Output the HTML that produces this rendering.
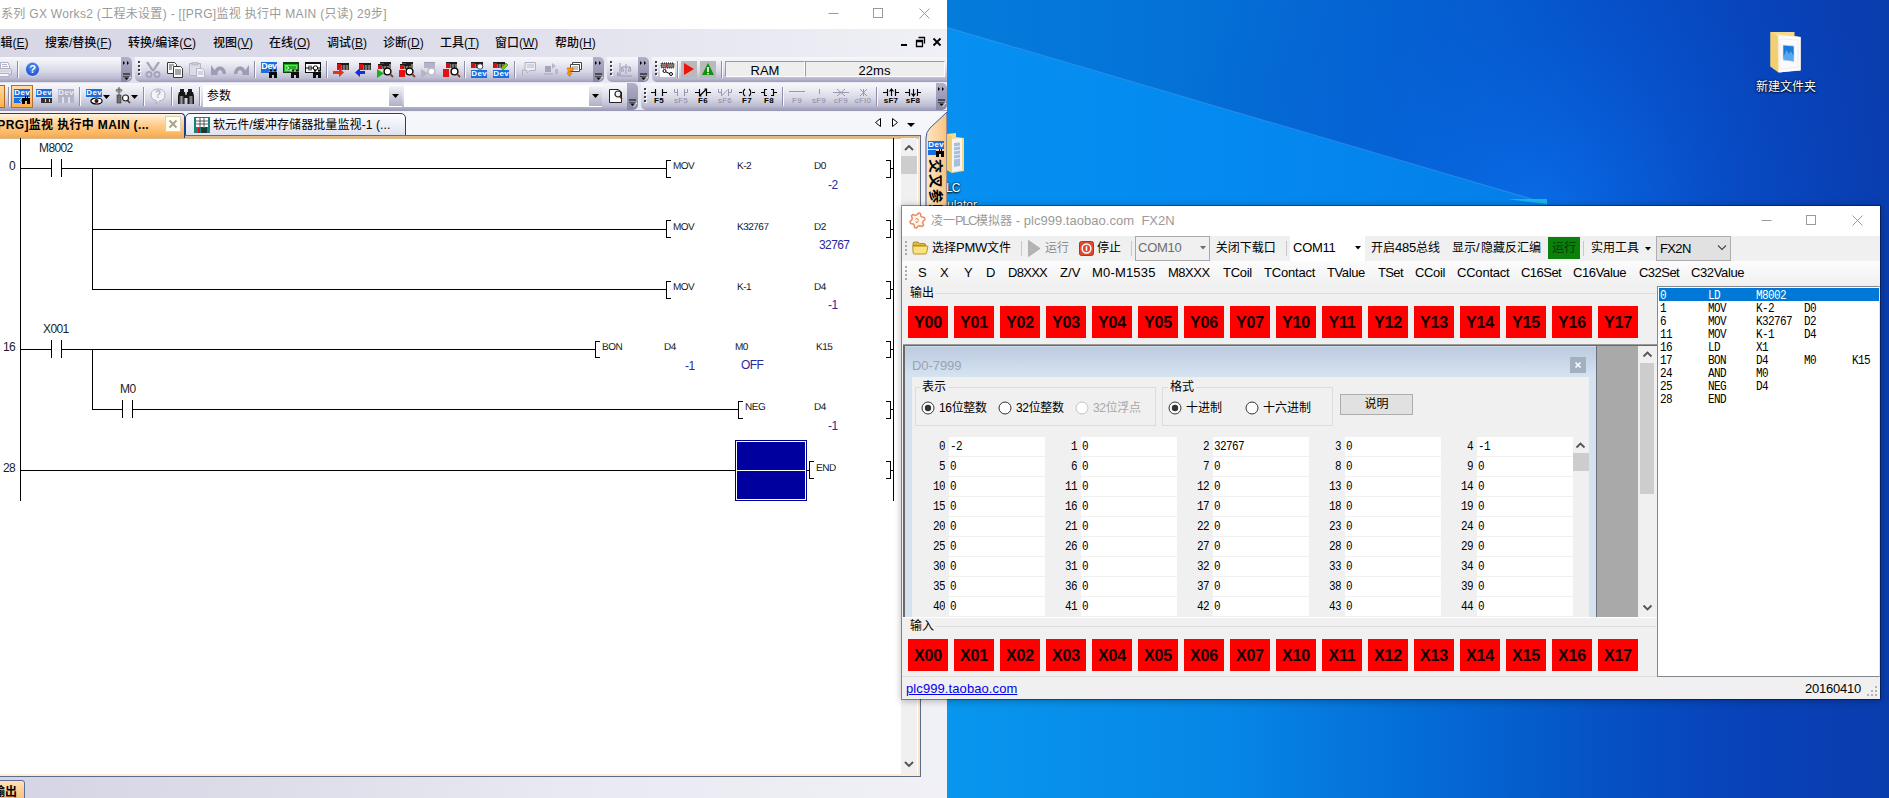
<!DOCTYPE html>
<html lang="zh-CN"><head><meta charset="utf-8"><title>GX Works2 / PLC</title>
<style>
*{box-sizing:border-box;margin:0;padding:0}
html,body{width:1889px;height:798px;overflow:hidden;background:#0a5fc8}
body{position:relative;font-family:"Liberation Sans","Noto Sans CJK SC",sans-serif;font-size:12px;color:#000}
div,svg,span.a{position:absolute}
.root{left:0;top:0;width:1889px;height:798px;overflow:hidden}
.t{white-space:nowrap}
.m{font-family:"Liberation Mono","Noto Sans CJK SC",monospace;white-space:pre}
u{text-decoration:underline;text-underline-offset:1px}

.tb{background:linear-gradient(180deg,#f7f7fb 0%,#ececf4 25%,#d9d9e7 55%,#bcbcd2 85%,#9d9dba 100%);border-radius:0 0 0 5px}
.ov{background:linear-gradient(180deg,#b0b0c8 0%,#9c9cb8 50%,#8686a6 100%);border-radius:0 5px 5px 0}
.sep{width:1px;background:#8e8ea8;box-shadow:1px 0 0 #fafafd}
.ic{font-family:"Liberation Sans",sans-serif;font-weight:bold;white-space:nowrap;text-align:center}
.gxm{font-size:12px;line-height:16px;white-space:nowrap;color:#08080c;font-weight:500}
.lad{background:#000}
.lt{font-size:10px;line-height:12px;color:#14141c;white-space:nowrap;text-rendering:geometricPrecision;letter-spacing:-0.5px}
.lb{font-size:12px;line-height:14px;color:#2a2a9c;white-space:nowrap;letter-spacing:-0.6px}
.ll{font-size:12px;line-height:14px;color:#1c1c26;white-space:nowrap;letter-spacing:-0.6px}

.st{font-size:13px;line-height:16px;white-space:nowrap;color:#000}
.st b{font-weight:normal;font-size:12px}
.rb{background:#ff0000;text-align:center;font-weight:bold;font-size:16px;line-height:33px;color:#140000;letter-spacing:-0.2px}
.gn{font-family:"Liberation Mono","Noto Sans CJK SC",monospace;font-size:11px;line-height:14px;white-space:pre;letter-spacing:-0.6px;color:#000;transform:scaleY(1.2);transform-origin:0 55%}
.gl{font-size:12px;line-height:14px;white-space:nowrap;color:#000}
.cell{background:#fff}
.sgrip{width:2px;height:2px;background:#b8b8b8}
</style></head>
<body>
<div class="root">
<!-- desktop -->
<div style="left:947px;top:0px;width:942px;height:798px;background:linear-gradient(90deg,#047cdc 0%,#0474d8 20%,#046ad4 40%,#055ccc 58%,#064ec4 70%,#0842b8 85%,#0a3cae 100%);"></div>
<svg style="left:947px;top:0px;" width="942" height="798" viewBox="0 0 942 798">
<defs>
<linearGradient id="bm" x1="0" y1="0" x2="1" y2="0">
<stop offset="0" stop-color="#0690f0"/><stop offset="0.5" stop-color="#0489f0"/><stop offset="1" stop-color="#047ee9"/>
</linearGradient>
<linearGradient id="bm2" x1="0" y1="0" x2="1" y2="0">
<stop offset="0" stop-color="#0896ee"/><stop offset="0.3" stop-color="#0686e6"/><stop offset="0.55" stop-color="#0468d4" stop-opacity="0.8"/><stop offset="0.8" stop-color="#064cba" stop-opacity="0"/>
</linearGradient>
<radialGradient id="gl" cx="593" cy="215" r="380" gradientUnits="userSpaceOnUse">
<stop offset="0" stop-color="#0a74f0" stop-opacity="0.75"/><stop offset="0.45" stop-color="#0860e0" stop-opacity="0.35"/><stop offset="1" stop-color="#0648c0" stop-opacity="0"/>
</radialGradient>
</defs>
<rect x="0" y="0" width="942" height="230" fill="url(#gl)"/>
<path d="M0 28 L600 204 L600 210 L0 210 Z" fill="url(#bm)"/>
<path d="M0 27.5 L600 203.5" stroke="#3aa6f4" stroke-width="1.2" opacity="0.55" fill="none"/>
<rect x="0" y="690" width="942" height="108" fill="url(#bm2)"/>
<path d="M600 204 L560 199 L600 199 Z" fill="#19b4e6"/>
</svg>
<svg style="left:1770px;top:32px;" width="32" height="42" viewBox="0 0 32 42">
<path d="M0.5 0 L24.5 0 L24.5 4 L30.5 5 L30.5 38 L9 40.5 L0.5 34.5 Z" fill="#f7d988"/>
<path d="M0.5 0 L8.5 4.5 L8.5 40.5 L0.5 34.5 Z" fill="#f3cf72"/>
<path d="M6.5 2.5 L30.5 5 L30.5 38.5 L9 36.5 L8.5 4.5 Z" fill="#f6f6fa"/>
<path d="M8.5 4.5 L30.5 5 L30.5 38.5 L8.5 40.5 Z" fill="#fbfbfd"/>
<path d="M10 7 L28 8 L28 35 L10 37 Z" fill="none" stroke="#e6e6ee" stroke-width="0.6"/>
<path d="M13 13 L24 14 L24 29.5 L13 28 Z" fill="#1a7ad8"/>
<path d="M13 26 L16.5 18 L19 22 L21 19 L24 25 L24 29.5 L13 28 Z" fill="#5aa6ee"/>
<path d="M13 13 L24 14 L24 29.5 L13 28 Z" fill="none" stroke="#cfe0f4" stroke-width="0.7"/>
</svg>
<div class="t" style="left:1686.0px;width:200px;text-align:center;top:79.0px;font-size:12px;line-height:16px;color:#fff;text-shadow:0 1px 2px #000,0 0 2px #000;">新建文件夹</div>
<svg style="left:947px;top:133px;" width="18" height="41" viewBox="0 0 18 41">
<path d="M0 1 L9 0 L9 4 L17 5 L17 38 L5 40 L0 37 Z" fill="#f5d98c"/>
<path d="M5 6 L15 5 L15 37 L5 39 Z" fill="#f4f4f6"/>
<path d="M7 10 L13 9.5 L13 33 L7 34 Z" fill="#a6c0dc"/>
<path d="M7 14 L13 13 M7 18 L13 17 M7 22 L13 21 M7 26 L13 25" stroke="#eef2f8" stroke-width="1"/>
<path d="M0 1 L5 4 L5 40 L0 37 Z" fill="#efcd70"/>
</svg>
<div class="t" style="left:946px;top:180.0px;font-size:12px;line-height:16px;color:#fff;letter-spacing:-0.8px;text-shadow:0 1px 2px #000,0 0 2px #000;">LC</div>
<div class="t" style="left:947px;top:197.0px;font-size:12px;line-height:16px;color:#fff;text-shadow:0 1px 2px #000,0 0 2px #000;">ulator</div>
<!-- GX Works2 window -->
<div style="left:0px;top:0px;width:947px;height:798px;background:#f0f0f7"></div>
<div style="left:0px;top:0px;width:947px;height:29px;background:#fff"></div>
<div class="t" style="left:1px;top:5.5px;font-size:12px;line-height:16px;color:#9a9a9a;letter-spacing:0.31px">系列 GX Works2 (工程未设置) - [[PRG]监视 执行中 MAIN (只读) 29步]</div>
<svg style="left:822px;top:3px;" width="120" height="22" viewBox="0 0 120 22"><path d="M6.5 10.5 H16.5" stroke="#9a9a9a" fill="none"/><rect x="51.5" y="5.5" width="9" height="9" stroke="#9a9a9a" fill="none"/><path d="M97.5 5.5 L107.5 15.5 M107.5 5.5 L97.5 15.5" stroke="#9a9a9a" fill="none"/></svg>
<div style="left:0px;top:29px;width:947px;height:28px;background:linear-gradient(90deg,#d7d7e6 0%,#dadae8 35%,#e6e6f0 70%,#f0f0f6 100%)"></div>
<div class="gxm" style="left:-11.5px;top:34.5px">编辑(<u>E</u>)</div>
<div class="gxm" style="left:45px;top:34.5px">搜索/替换(<u>F</u>)</div>
<div class="gxm" style="left:128px;top:34.5px">转换/编译(<u>C</u>)</div>
<div class="gxm" style="left:213px;top:34.5px">视图(<u>V</u>)</div>
<div class="gxm" style="left:269px;top:34.5px">在线(<u>O</u>)</div>
<div class="gxm" style="left:327px;top:34.5px">调试(<u>B</u>)</div>
<div class="gxm" style="left:383px;top:34.5px">诊断(<u>D</u>)</div>
<div class="gxm" style="left:440px;top:34.5px">工具(<u>T</u>)</div>
<div class="gxm" style="left:495px;top:34.5px">窗口(<u>W</u>)</div>
<div class="gxm" style="left:555px;top:34.5px">帮助(<u>H</u>)</div>
<svg style="left:898px;top:35px;" width="46" height="14" viewBox="0 0 46 14"><rect x="3" y="9" width="6" height="2" fill="#000"/><path d="M20.5 2.5 H26.5 V8.5 M18.5 5.5 H24.5 V11.5 H18.5 Z M18.5 6.5 H24.5" stroke="#000" stroke-width="1.3" fill="none"/><path d="M35.5 3.5 L42.5 10.5 M42.5 3.5 L35.5 10.5" stroke="#000" stroke-width="1.8" fill="none"/></svg>
<div style="left:0px;top:57px;width:947px;height:53px;background:linear-gradient(90deg,#e0e0ec,#ececf4)"></div>
<div class="tb" style="left:0px;top:57px;width:121px;height:25px;border-radius:0"></div>
<div class="ov" style="left:121px;top:57px;width:11px;height:25px;"></div><svg style="left:121px;top:59px;" width="11" height="24" viewBox="0 0 11 24"><path d="M2 2 L4 4 L2 6 Z M6 2 L8 4 L6 6 Z" fill="#000"/><path d="M2 15 H9" stroke="#000" stroke-width="1"/><path d="M2 17 L9 17 L5.5 21 Z" fill="#000"/><path d="M3 18 L10 18 L6.5 22" fill="none" stroke="#fff" stroke-width="0.8" opacity="0.8"/></svg>
<div class="tb" style="left:135px;top:57px;width:459px;height:25px;"></div>
<div class="ov" style="left:593px;top:57px;width:11px;height:25px;"></div><svg style="left:593px;top:59px;" width="11" height="24" viewBox="0 0 11 24"><path d="M2 2 L4 4 L2 6 Z M6 2 L8 4 L6 6 Z" fill="#000"/><path d="M2 15 H9" stroke="#000" stroke-width="1"/><path d="M2 17 L9 17 L5.5 21 Z" fill="#000"/><path d="M3 18 L10 18 L6.5 22" fill="none" stroke="#fff" stroke-width="0.8" opacity="0.8"/></svg>
<div class="tb" style="left:607px;top:57px;width:31px;height:25px;"></div>
<div class="ov" style="left:638px;top:57px;width:11px;height:25px;"></div><svg style="left:638px;top:59px;" width="11" height="24" viewBox="0 0 11 24"><path d="M2 2 L4 4 L2 6 Z M6 2 L8 4 L6 6 Z" fill="#000"/><path d="M2 15 H9" stroke="#000" stroke-width="1"/><path d="M2 17 L9 17 L5.5 21 Z" fill="#000"/><path d="M3 18 L10 18 L6.5 22" fill="none" stroke="#fff" stroke-width="0.8" opacity="0.8"/></svg>
<div class="tb" style="left:652px;top:57px;width:295px;height:25px;"></div>
<div class="tb" style="left:0px;top:83px;width:627px;height:27px;border-radius:0"></div>
<div class="ov" style="left:627px;top:83px;width:11px;height:27px;"></div><svg style="left:627px;top:85px;" width="11" height="24" viewBox="0 0 11 24"><path d="M2 15 H9" stroke="#000" stroke-width="1"/><path d="M2 17 L9 17 L5.5 21 Z" fill="#000"/><path d="M3 18 L10 18 L6.5 22" fill="none" stroke="#fff" stroke-width="0.8" opacity="0.8"/></svg>
<div class="tb" style="left:641px;top:83px;width:295px;height:27px;"></div>
<div class="ov" style="left:936px;top:83px;width:11px;height:27px;"></div><svg style="left:936px;top:85px;" width="11" height="24" viewBox="0 0 11 24"><path d="M2 2 L4 4 L2 6 Z M6 2 L8 4 L6 6 Z" fill="#000"/><path d="M2 15 H9" stroke="#000" stroke-width="1"/><path d="M2 17 L9 17 L5.5 21 Z" fill="#000"/><path d="M3 18 L10 18 L6.5 22" fill="none" stroke="#fff" stroke-width="0.8" opacity="0.8"/></svg>
<svg style="left:-4px;top:62px;" width="16" height="16" viewBox="0 0 16 16"><path d="M4.5 0.5 H12 L13.5 4 V7 H4.5 Z" fill="#fafafc" stroke="#b0b0c4"/><path d="M6 2.5 H11 M6 4.5 H12" stroke="#b4b4c8"/><path d="M0.5 6.5 H14.5 L15.5 8 V12.5 H0.5 Z" fill="#e2e2ec" stroke="#aaaac0"/><path d="M2.5 11.5 H13 V14.5 H2.5 Z" fill="#f6f6fa" stroke="#b0b0c4"/><path d="M2 9 H14" stroke="#c4c4d4"/></svg>
<div class="sep" style="left:17px;top:61px;width:1px;height:17px;"></div>
<svg style="left:25px;top:62px;" width="15" height="15" viewBox="0 0 15 15"><circle cx="7.5" cy="7.5" r="7" fill="#2a5fd6" stroke="#dfe6fa" stroke-width="1"/><circle cx="7.5" cy="5.5" r="5" fill="#4c84ea" opacity="0.7"/></svg><div class="ic" style="left:25px;top:63px;width:15px;font-size:11px;line-height:13px;color:#fff">?</div>
<div style="left:138px;top:61px;width:2px;height:2px;background:#3c3c50;box-shadow:1px 1px 0 #fff"></div><div style="left:138px;top:65px;width:2px;height:2px;background:#3c3c50;box-shadow:1px 1px 0 #fff"></div><div style="left:138px;top:69px;width:2px;height:2px;background:#3c3c50;box-shadow:1px 1px 0 #fff"></div><div style="left:138px;top:73px;width:2px;height:2px;background:#3c3c50;box-shadow:1px 1px 0 #fff"></div>
<svg style="left:145px;top:62px;" width="16" height="16" viewBox="0 0 16 16"><path d="M2 0 L8 9 M14 0 L8 9" stroke="#a2a2b8" stroke-width="2.2" fill="none"/><circle cx="4" cy="12.5" r="2.6" fill="none" stroke="#a2a2b8" stroke-width="1.8"/><circle cx="12" cy="12.5" r="2.6" fill="none" stroke="#a2a2b8" stroke-width="1.8"/></svg>
<svg style="left:167px;top:62px;" width="16" height="16" viewBox="0 0 16 16"><path d="M0.5 0.5 H7.5 L9.5 2.5 V11.5 H0.5 Z" fill="#fff" stroke="#3a3a3a"/><path d="M6.5 4.5 H13.5 L15.5 6.5 V15.5 H6.5 Z" fill="#fff" stroke="#3a3a3a"/><path d="M2 3 H7 M2 5 H5 M2 7 H5 M8 8 H14 M8 10 H14 M8 12 H14" stroke="#3a3a3a" stroke-width="0.9"/></svg>
<svg style="left:189px;top:62px;" width="16" height="16" viewBox="0 0 16 16"><path d="M0.5 1.5 H11.5 V13.5 H0.5 Z" fill="#dcdce8" stroke="#b4b4c8"/><rect x="3" y="0" width="6" height="3" fill="#c8c8d8" stroke="#b4b4c8" stroke-width="0.8"/><path d="M7.5 6.5 H13 L15.5 9 V15.5 H7.5 Z" fill="#f2f2f7" stroke="#b4b4c8"/><path d="M9 10 H14 M9 12 H14" stroke="#b4b4c8"/></svg>
<svg style="left:211px;top:62px;" width="16" height="16" viewBox="0 0 16 16"><g><path d="M0 3 L0 13 L7 13 Z" fill="#9c9cb4"/><path d="M3 12 C3 2 15 2 15 12 L11.5 12 C11.5 7 6.5 7 6.5 12 Z" fill="#9c9cb4"/></g></svg>
<svg style="left:233px;top:62px;" width="16" height="16" viewBox="0 0 16 16"><g transform="translate(16,0) scale(-1,1)"><path d="M0 3 L0 13 L7 13 Z" fill="#9c9cb4"/><path d="M3 12 C3 2 15 2 15 12 L11.5 12 C11.5 7 6.5 7 6.5 12 Z" fill="#9c9cb4"/></g></svg>
<div class="sep" style="left:254px;top:61px;width:1px;height:17px;"></div>
<div style="left:261px;top:62px;width:16px;height:11px;background:#1a6ee0;overflow:hidden"><div class="ic" style="left:-3px;top:-1px;width:22px;font-size:9px;line-height:10px;color:#fff;letter-spacing:-0.35px">Dev</div></div><svg style="left:268px;top:68px;" width="10" height="10" viewBox="0 0 10 10"><path d="M1 4 H2 V1.5 H4 V4 H6 V1.5 H8 V4 H9 V10 H6 V7 H4 V10 H1 Z" fill="#0c0c0c"/><path d="M0.5 3.5 H9.5" stroke="#e8e8f0" stroke-width="0.6" opacity="0.6"/></svg>
<div style="left:283px;top:62px;width:16px;height:11px;background:#20b020;border:1px solid #0c400c;border-top-width:2px"></div><svg style="left:283px;top:62px;" width="16" height="11" viewBox="0 0 16 11"><rect x="2.5" y="3.5" width="11" height="5" fill="none" stroke="#a8f0a8" stroke-width="0.6"/><path d="M3.5 4 L6 5.8 L3.5 7.6 M7 8 H11" stroke="#f0fff0" fill="none" stroke-width="1"/></svg><svg style="left:290px;top:68px;" width="10" height="10" viewBox="0 0 10 10"><path d="M1 4 H2 V1.5 H4 V4 H6 V1.5 H8 V4 H9 V10 H6 V7 H4 V10 H1 Z" fill="#0c0c0c"/><path d="M0.5 3.5 H9.5" stroke="#e8e8f0" stroke-width="0.6" opacity="0.6"/></svg>
<div style="left:305px;top:62px;width:16px;height:11px;background:#fff;border:1px solid #101010;border-top-width:2px"></div><svg style="left:305px;top:62px;" width="16" height="11" viewBox="0 0 16 11"><path d="M1 6 H4 M4 3.5 V8.5 M6 3.5 V8.5 M6 6 H8.5 M13 6 H15" stroke="#000" fill="none"/><circle cx="10.5" cy="6" r="2.2" fill="#fff" stroke="#000"/></svg><svg style="left:312px;top:68px;" width="10" height="10" viewBox="0 0 10 10"><path d="M1 4 H2 V1.5 H4 V4 H6 V1.5 H8 V4 H9 V10 H6 V7 H4 V10 H1 Z" fill="#0c0c0c"/><path d="M0.5 3.5 H9.5" stroke="#e8e8f0" stroke-width="0.6" opacity="0.6"/></svg>
<div class="sep" style="left:326px;top:61px;width:1px;height:17px;"></div>
<div style="left:337px;top:63px;width:12px;height:7px;background:repeating-linear-gradient(90deg,#7a7468 0 2px,#3a3632 2px 3px);border-top:2px solid #1c1c1c"></div><div style="left:337px;top:64px;width:4px;height:6px;background:#d01010"></div><svg style="left:333px;top:68px;" width="12" height="10" viewBox="0 0 12 10"><path d="M11 4.5 L6 0 L6 3 L0 3 L0 6 L6 6 L6 9 Z" fill="#e83010"/></svg>
<div style="left:359px;top:63px;width:12px;height:7px;background:repeating-linear-gradient(90deg,#7a7468 0 2px,#3a3632 2px 3px);border-top:2px solid #1c1c1c"></div><div style="left:359px;top:64px;width:4px;height:6px;background:#d01010"></div><svg style="left:355px;top:68px;" width="11" height="10" viewBox="0 0 11 10"><path d="M0 4.5 L5 0 L5 3 L10 3 L10 6 L5 6 L5 9 Z" fill="#1030e0"/></svg>
<div style="left:380px;top:62px;width:11px;height:6px;background:repeating-linear-gradient(90deg,#7a7468 0 2px,#3a3632 2px 3px);border-top:2px solid #1c1c1c"></div><div style="left:380px;top:63px;width:4px;height:5px;background:#d01010"></div><div style="left:378px;top:64px;width:11px;height:5px;background:repeating-linear-gradient(90deg,#7a7468 0 2px,#3a3632 2px 3px);border-top:2px solid #1c1c1c"></div><div style="left:378px;top:65px;width:4px;height:4px;background:#d01010"></div><svg style="left:377px;top:69px;" width="7" height="9" viewBox="0 0 7 9"><path d="M0 0 L7 4.5 L0 9 Z" fill="#18b018"/></svg><svg style="left:383px;top:67px;" width="11" height="11" viewBox="0 0 11 11"><circle cx="4.5" cy="4.5" r="3.4" fill="#fff" stroke="#000" stroke-width="1.4"/><path d="M7 7 L10 10" stroke="#8a3c20" stroke-width="1.8"/></svg>
<div style="left:402px;top:62px;width:11px;height:6px;background:repeating-linear-gradient(90deg,#7a7468 0 2px,#3a3632 2px 3px);border-top:2px solid #1c1c1c"></div><div style="left:402px;top:63px;width:4px;height:5px;background:#d01010"></div><div style="left:400px;top:64px;width:11px;height:5px;background:repeating-linear-gradient(90deg,#7a7468 0 2px,#3a3632 2px 3px);border-top:2px solid #1c1c1c"></div><div style="left:400px;top:65px;width:4px;height:4px;background:#d01010"></div><div style="left:399px;top:70px;width:6px;height:7px;background:#e81010"></div><svg style="left:405px;top:67px;" width="11" height="11" viewBox="0 0 11 11"><circle cx="4.5" cy="4.5" r="3.4" fill="#fff" stroke="#000" stroke-width="1.4"/><path d="M7 7 L10 10" stroke="#8a3c20" stroke-width="1.8"/></svg>
<div style="left:424px;top:62px;width:11px;height:6px;background:#b4b4c6;border-top:1px solid #a0a0b4"></div><svg style="left:421px;top:69px;" width="7" height="9" viewBox="0 0 7 9"><path d="M0 0 L7 4.5 L0 9 Z" fill="#b4b4c6"/></svg><svg style="left:427px;top:67px;" width="11" height="11" viewBox="0 0 11 11"><circle cx="4.5" cy="4.5" r="3.4" fill="#fff" stroke="#b8b8c8" stroke-width="1.4"/><path d="M7 7 L10 10" stroke="#c0c0d0" stroke-width="1.8"/></svg>
<div style="left:446px;top:62px;width:11px;height:6px;background:repeating-linear-gradient(90deg,#7a7468 0 2px,#3a3632 2px 3px);border-top:2px solid #1c1c1c"></div><div style="left:446px;top:63px;width:4px;height:5px;background:#d01010"></div><div style="left:443px;top:69px;width:6px;height:8px;background:#e81010"></div><svg style="left:450px;top:67px;" width="11" height="11" viewBox="0 0 11 11"><circle cx="4.5" cy="4.5" r="3.4" fill="#fff" stroke="#000" stroke-width="1.4"/><path d="M7 7 L10 10" stroke="#8a3c20" stroke-width="1.8"/></svg>
<div class="sep" style="left:464px;top:61px;width:1px;height:17px;"></div>
<div style="left:471px;top:62px;width:12px;height:6px;background:repeating-linear-gradient(90deg,#7a7468 0 2px,#3a3632 2px 3px);border-top:2px solid #1c1c1c"></div><div style="left:471px;top:63px;width:4px;height:5px;background:#d01010"></div><svg style="left:476px;top:62px;" width="9" height="9" viewBox="0 0 9 9"><circle cx="4" cy="4.5" r="2.8" fill="#fff" stroke="#222" stroke-width="0.8"/></svg><div style="left:471px;top:70px;width:16px;height:8px;background:#1a6ee0;overflow:hidden"><div class="ic" style="left:-3px;top:0;width:22px;font-size:8px;line-height:8px;color:#fff;letter-spacing:0.45px;text-indent:0.4px">Dev</div></div>
<div style="left:493px;top:62px;width:12px;height:6px;background:repeating-linear-gradient(90deg,#7a7468 0 2px,#3a3632 2px 3px);border-top:2px solid #1c1c1c"></div><div style="left:493px;top:63px;width:4px;height:5px;background:#d01010"></div><svg style="left:500px;top:62px;" width="9" height="9" viewBox="0 0 9 9"><path d="M1 6 L6 1 L8 3 L3 8 Z" fill="#78c818" stroke="#3c7808" stroke-width="0.6"/></svg><div style="left:493px;top:70px;width:16px;height:8px;background:#1a6ee0;overflow:hidden"><div class="ic" style="left:-3px;top:0;width:22px;font-size:8px;line-height:8px;color:#fff;letter-spacing:0.45px;text-indent:0.4px">Dev</div></div>
<div class="sep" style="left:514px;top:61px;width:1px;height:17px;"></div>
<svg style="left:522px;top:62px;" width="16" height="16" viewBox="0 0 16 16"><path d="M3 0.5 H13.5 V8.5 H8 L5 11 V8.5 H3 Z" fill="#ececf3" stroke="#b0b0c4"/><path d="M5 3 H12 M5 5 H12" stroke="#b8b8cc"/><path d="M0.5 14 V8 H3" fill="none" stroke="#b0b0c4"/></svg>
<svg style="left:544px;top:62px;" width="16" height="16" viewBox="0 0 16 16"><rect x="1" y="4" width="6" height="6" fill="#a4a4bc"/><path d="M8 1 L12 4 L8 7 Z M11 7 V12 H14 V7 Z M0 11 H9 V13 H0 Z" fill="#b8b8cc"/></svg>
<svg style="left:566px;top:62px;" width="16" height="16" viewBox="0 0 16 16"><path d="M6.5 0.5 H15.5 V7.5 H6.5 Z" fill="#fff" stroke="#444"/><path d="M4.5 2.5 H13.5 V9.5 H4.5 Z" fill="#fff" stroke="#444"/><path d="M6 5 H12 M6 7 H12" stroke="#666" stroke-width="0.8"/><path d="M1 6 H7 V9 H4 V11 H6 L3.5 14.5 L1 11 H2 V8 Z" fill="#ff9410" stroke="#c86400" stroke-width="0.6"/></svg>
<div style="left:610px;top:61px;width:2px;height:2px;background:#3c3c50;box-shadow:1px 1px 0 #fff"></div><div style="left:610px;top:65px;width:2px;height:2px;background:#3c3c50;box-shadow:1px 1px 0 #fff"></div><div style="left:610px;top:69px;width:2px;height:2px;background:#3c3c50;box-shadow:1px 1px 0 #fff"></div><div style="left:610px;top:73px;width:2px;height:2px;background:#3c3c50;box-shadow:1px 1px 0 #fff"></div>
<svg style="left:617px;top:62px;" width="16" height="16" viewBox="0 0 16 16"><path d="M3 1 V14 M3 14 H15 M9 2 V12 M5 5 H13 M5 5 L4 9 H7 Z M13 5 L11 9 H14 Z" stroke="#9c9cb6" fill="none"/><path d="M0 10 L4 12.5 L0 15 Z" fill="#a4a4bc"/></svg>
<div style="left:655px;top:61px;width:2px;height:2px;background:#3c3c50;box-shadow:1px 1px 0 #fff"></div><div style="left:655px;top:65px;width:2px;height:2px;background:#3c3c50;box-shadow:1px 1px 0 #fff"></div><div style="left:655px;top:69px;width:2px;height:2px;background:#3c3c50;box-shadow:1px 1px 0 #fff"></div><div style="left:655px;top:73px;width:2px;height:2px;background:#3c3c50;box-shadow:1px 1px 0 #fff"></div>
<div style="left:660px;top:61px;width:15px;height:16px;background:#fff"></div><svg style="left:660px;top:61px;" width="15" height="16" viewBox="0 0 15 16"><rect x="1" y="2" width="13" height="5" rx="1" fill="#7c7c7c" stroke="#000" stroke-dasharray="1 1" stroke-width="1"/><path d="M6 3 L9 4.5 L6 6 Z" fill="#e02020"/><circle cx="4.5" cy="10" r="1.5" fill="none" stroke="#000"/><circle cx="11" cy="13" r="1.5" fill="none" stroke="#000"/><path d="M6 11 L9.5 12.5" stroke="#000"/></svg>
<div class="sep" style="left:677px;top:61px;width:1px;height:17px;"></div>
<div style="left:681px;top:61px;width:16px;height:17px;background:#b9b9b9"></div>
<svg style="left:684px;top:63px;" width="11" height="12" viewBox="0 0 11 12"><path d="M0 0 L10 6 L0 12 Z" fill="#f01010"/></svg>
<div style="left:700px;top:61px;width:16px;height:17px;background:#b9b9b9"></div>
<svg style="left:702px;top:63px;" width="12" height="12" viewBox="0 0 12 12"><path d="M6 0 L12 12 L0 12 Z" fill="#109010"/><path d="M6 4 V9" stroke="#fff" stroke-width="1.6"/><rect x="5.2" y="10" width="1.6" height="1.4" fill="#fff"/></svg>
<div class="sep" style="left:721px;top:61px;width:1px;height:17px;"></div>
<div style="left:725px;top:61px;width:80px;height:16px;background:#eeeeee;border:1px solid #9a9aa4;border-right-color:#fff;border-bottom-color:#fff"></div>
<div class="t" style="left:665.0px;width:200px;text-align:center;top:61.5px;font-size:13px;line-height:17px;color:#000;">RAM</div>
<div style="left:805px;top:61px;width:140px;height:16px;background:#eeeeee;border:1px solid #9a9aa4;border-right-color:#fff;border-bottom-color:#fff"></div>
<div class="t" style="left:774.5px;width:200px;text-align:center;top:61.5px;font-size:13px;line-height:17px;color:#000;">22ms</div>
<div style="left:-11px;top:85px;width:16px;height:23px;background:linear-gradient(180deg,#ffd9a0,#ffb24c);border:1px solid #b06a20"></div>
<div class="sep" style="left:8px;top:87px;width:1px;height:19px;"></div>
<div style="left:11px;top:85px;width:22px;height:23px;background:linear-gradient(180deg,#ffdcaa,#fdb04e);border:1px solid #b4702c"></div>
<div style="left:14px;top:89px;width:16px;height:7.5px;background:#1a6ee0;overflow:hidden"><div class="ic" style="left:-3px;top:0;width:22px;font-size:8px;line-height:7.5px;color:#fff;letter-spacing:0.45px;text-indent:0.4px">Dev</div></div>
<div style="left:14px;top:97.5px;width:8px;height:5.5px;background:#1a6ee0"></div>
<svg style="left:19px;top:98px;" width="4" height="5" viewBox="0 0 4 5"><path d="M3.5 0 L0.5 2.5 L3.5 5" fill="none" stroke="#e8f0ff" stroke-width="1"/></svg>
<svg style="left:21px;top:95px;" width="10" height="10" viewBox="0 0 10 10"><path d="M1 3 H4 V1 H5 V3 H6 V1 H7 V3 H9 V9 H6 V6 H4 V9 H1 Z" fill="#000"/></svg>
<div style="left:36px;top:89px;width:16px;height:7.5px;background:#1a6ee0;overflow:hidden"><div class="ic" style="left:-3px;top:0;width:22px;font-size:8px;line-height:7.5px;color:#fff;letter-spacing:0.45px;text-indent:0.4px">Dev</div></div>
<div style="left:41px;top:98px;width:11px;height:5px;background:repeating-linear-gradient(90deg,#333 0 3px,#ddd 3px 4px);border:1px solid #333"></div>
<div style="left:58px;top:89px;width:16px;height:7.5px;background:#b0b0c6;overflow:hidden"><div class="ic" style="left:-3px;top:0;width:22px;font-size:8px;line-height:7.5px;color:#ececf4;letter-spacing:0.45px;text-indent:0.4px">Dev</div></div>
<div style="left:58px;top:97px;width:16px;height:6px;background:repeating-linear-gradient(90deg,#b4b4c8 0 4px,#e0e0ea 4px 6px)"></div>
<div class="sep" style="left:79px;top:87px;width:1px;height:19px;"></div>
<div style="left:86px;top:89px;width:16px;height:7.5px;background:#1a6ee0;overflow:hidden"><div class="ic" style="left:-3px;top:0;width:22px;font-size:8px;line-height:7.5px;color:#fff;letter-spacing:0.45px;text-indent:0.4px">Dev</div></div>
<svg style="left:90px;top:96.5px;" width="13" height="8" viewBox="0 0 13 8"><ellipse cx="6.5" cy="4" rx="5.6" ry="3" fill="#fff" stroke="#000" stroke-width="1.2"/><circle cx="6.5" cy="4" r="2" fill="#3a1010"/></svg>
<svg style="left:103px;top:95px;" width="8" height="5" viewBox="0 0 8 5"><path d="M0 0 H7 L3.5 4 Z" fill="#000"/></svg>
<svg style="left:115px;top:87px;" width="16" height="18" viewBox="0 0 16 18"><path d="M4 0 V8 M1 3 H7" stroke="#555" /><ellipse cx="4" cy="3.5" rx="3" ry="1.6" fill="none" stroke="#666" stroke-width="0.8"/><rect x="2" y="8" width="4" height="8" fill="#707070" stroke="#333" stroke-width="0.6"/><circle cx="10.5" cy="11" r="3" fill="#fff" stroke="#222" stroke-width="1.2"/><path d="M12.5 13.5 L15 16" stroke="#5a2c10" stroke-width="1.6"/></svg>
<svg style="left:131px;top:95px;" width="8" height="5" viewBox="0 0 8 5"><path d="M0 0 H7 L3.5 4 Z" fill="#000"/></svg>
<div class="sep" style="left:143px;top:87px;width:1px;height:19px;"></div>
<svg style="left:150px;top:88px;" width="16" height="17" viewBox="0 0 16 17"><path d="M8 1 C12.5 1 15 3.5 15 7 C15 10.5 12.5 12.5 9.5 12.8 L6 16 L6.5 12.6 C3 12 1 10 1 7 C1 3.5 3.5 1 8 1 Z" fill="#f3f3f8" stroke="#aeaec2"/></svg>
<div class="ic" style="left:150px;top:89px;width:16px;font-size:10px;line-height:12px;color:#b0b0c4">?</div>
<div class="sep" style="left:171px;top:87px;width:1px;height:19px;"></div>
<svg style="left:178px;top:88px;" width="17" height="17" viewBox="0 0 17 17"><defs><linearGradient id="bn" x1="0" y1="0" x2="1" y2="0"><stop offset="0" stop-color="#222"/><stop offset="0.5" stop-color="#9a9a9a"/><stop offset="1" stop-color="#1a1a1a"/></linearGradient></defs><path d="M2 1 H6 V4 H2 Z M10 1 H14 V4 H10 Z" fill="#1c1c1c"/><path d="M1 4 H7 L7.5 7 H8.5 L9 4 H15 L16 8 V16 H9.5 V10 H6.5 V16 H0 V8 Z" fill="#161616"/><rect x="1" y="8" width="5" height="8" fill="url(#bn)"/><rect x="10.5" y="8" width="5" height="8" fill="url(#bn)"/></svg>
<div class="sep" style="left:199px;top:87px;width:1px;height:19px;"></div>
<div style="left:203px;top:85px;width:199px;height:22px;background:#fff"></div>
<div class="t" style="left:207px;top:88.0px;font-size:12px;line-height:16px;color:#000;">参数</div>
<div style="left:389px;top:86px;width:13px;height:20px;background:linear-gradient(180deg,#f2f2f7,#c9c9da 60%,#b0b0c6)"></div>
<svg style="left:392px;top:94px;" width="8" height="5" viewBox="0 0 8 5"><path d="M0 0 H7 L3.5 4 Z" fill="#000"/></svg>
<div style="left:404px;top:85px;width:198px;height:22px;background:#fff"></div>
<div style="left:589px;top:86px;width:13px;height:20px;background:linear-gradient(180deg,#f2f2f7,#c9c9da 60%,#b0b0c6)"></div>
<svg style="left:592px;top:94px;" width="8" height="5" viewBox="0 0 8 5"><path d="M0 0 H7 L3.5 4 Z" fill="#000"/></svg>
<svg style="left:608px;top:88px;" width="16" height="17" viewBox="0 0 16 17"><path d="M1.5 1.5 H10 L13.5 4 V14.5 H1.5 Z" fill="#fff" stroke="#222"/><circle cx="10" cy="6" r="3" fill="#f4f4f4" stroke="#222" stroke-width="1.2"/><path d="M12 8.5 L14 11" stroke="#5a2c10" stroke-width="1.6"/></svg>
<div style="left:644px;top:88px;width:2px;height:2px;background:#3c3c50;box-shadow:1px 1px 0 #fff"></div><div style="left:644px;top:92px;width:2px;height:2px;background:#3c3c50;box-shadow:1px 1px 0 #fff"></div><div style="left:644px;top:96px;width:2px;height:2px;background:#3c3c50;box-shadow:1px 1px 0 #fff"></div><div style="left:644px;top:100px;width:2px;height:2px;background:#3c3c50;box-shadow:1px 1px 0 #fff"></div>
<svg style="left:651px;top:88px;" width="16" height="9" viewBox="0 0 16 9"><path d="M0 4.5 H4 M4.5 1 V8 M11.5 1 V8 M12 4.5 H16" stroke="#000" stroke-width="1.15" fill="none"/></svg><div class="ic" style="left:647px;top:97.2px;width:24px;font-size:8px;line-height:8px;color:#000;font-weight:bold;letter-spacing:0.25px">F5</div>
<svg style="left:673px;top:88px;" width="16" height="9" viewBox="0 0 16 9"><path d="M1.5 1 V4.5 H4 M4.5 1 V8 M11.5 1 V8 M12 4.5 H14.5 V1" stroke="#9898b2" stroke-width="1" fill="none"/></svg><div class="ic" style="left:669px;top:97.2px;width:24px;font-size:8px;line-height:8px;color:#8a8aa6;font-weight:normal;letter-spacing:0.25px">sF5</div>
<svg style="left:695px;top:88px;" width="16" height="9" viewBox="0 0 16 9"><path d="M0 4.5 H4 M4.5 1 V8 M11.5 1 V8 M12 4.5 H16 M5 7.5 L11 1.5 M4.5 6 V8 H6.5 M9.5 1 H11.5 V3" stroke="#000" stroke-width="1.15" fill="none"/></svg><div class="ic" style="left:691px;top:97.2px;width:24px;font-size:8px;line-height:8px;color:#000;font-weight:bold;letter-spacing:0.25px">F6</div>
<svg style="left:717px;top:88px;" width="16" height="9" viewBox="0 0 16 9"><path d="M1.5 1 V4.5 H4 M4.5 1 V8 M11.5 1 V8 M12 4.5 H14.5 V1 M5 7.5 L11 1.5" stroke="#9898b2" stroke-width="1" fill="none"/></svg><div class="ic" style="left:713px;top:97.2px;width:24px;font-size:8px;line-height:8px;color:#8a8aa6;font-weight:normal;letter-spacing:0.25px">sF6</div>
<svg style="left:739px;top:88px;" width="16" height="9" viewBox="0 0 16 9"><path d="M0 4.5 H3 M6 1 C3.6 3 3.6 6 6 8 M10 1 C12.4 3 12.4 6 10 8 M13 4.5 H16" stroke="#000" stroke-width="1.15" fill="none"/></svg><div class="ic" style="left:735px;top:97.2px;width:24px;font-size:8px;line-height:8px;color:#000;font-weight:bold;letter-spacing:0.25px">F7</div>
<svg style="left:761px;top:88px;" width="16" height="9" viewBox="0 0 16 9"><path d="M0 4.5 H3 M6 1.5 H3.5 V7.5 H6 M10 1.5 H12.5 V7.5 H10 M13 4.5 H16" stroke="#000" stroke-width="1.15" fill="none"/></svg><div class="ic" style="left:757px;top:97.2px;width:24px;font-size:8px;line-height:8px;color:#000;font-weight:bold;letter-spacing:0.25px">F8</div>
<div class="sep" style="left:782px;top:87px;width:1px;height:19px;"></div>
<svg style="left:789px;top:88px;" width="16" height="9" viewBox="0 0 16 9"><path d="M0 3.5 H16" stroke="#9898b2" stroke-width="1" fill="none"/></svg><div class="ic" style="left:785px;top:97.2px;width:24px;font-size:8px;line-height:8px;color:#8a8aa6;font-weight:normal;letter-spacing:0.25px">F9</div>
<svg style="left:811px;top:88px;" width="16" height="9" viewBox="0 0 16 9"><path d="M8.5 1 V6" stroke="#9898b2" stroke-width="1" fill="none"/></svg><div class="ic" style="left:807px;top:97.2px;width:24px;font-size:8px;line-height:8px;color:#8a8aa6;font-weight:normal;letter-spacing:0.25px">sF9</div>
<svg style="left:833px;top:88px;" width="16" height="9" viewBox="0 0 16 9"><path d="M0 4.5 H16 M4 1 L12 8 M12 1 L4 8" stroke="#9898b2" stroke-width="1" fill="none"/></svg><div class="ic" style="left:829px;top:97.2px;width:24px;font-size:8px;line-height:8px;color:#8a8aa6;font-weight:normal;letter-spacing:0.25px">cF9</div>
<svg style="left:855px;top:88px;" width="16" height="9" viewBox="0 0 16 9"><path d="M8.5 1 V8 M5 1 L12 8 M12 1 L5 8" stroke="#9898b2" stroke-width="1" fill="none"/></svg><div class="ic" style="left:851px;top:97.2px;width:24px;font-size:8px;line-height:8px;color:#8a8aa6;font-weight:normal;letter-spacing:0.25px">cFI0</div>
<div class="sep" style="left:876px;top:87px;width:1px;height:19px;"></div>
<svg style="left:883px;top:88px;" width="16" height="9" viewBox="0 0 16 9"><path d="M0 4.5 H4 M4.5 1 V8 M12.5 1 V8 M13 4.5 H16 M8.5 8 V1.5 M6.5 3.5 L8.5 1 L10.5 3.5" stroke="#000" stroke-width="1.15" fill="none"/></svg><div class="ic" style="left:879px;top:97.2px;width:24px;font-size:8px;line-height:8px;color:#000;font-weight:bold;letter-spacing:0.25px">sF7</div>
<svg style="left:905px;top:88px;" width="16" height="9" viewBox="0 0 16 9"><path d="M0 4.5 H4 M4.5 1 V8 M12.5 1 V8 M13 4.5 H16 M8.5 1 V7.5 M6.5 5.5 L8.5 8 L10.5 5.5" stroke="#000" stroke-width="1.15" fill="none"/></svg><div class="ic" style="left:901px;top:97.2px;width:24px;font-size:8px;line-height:8px;color:#000;font-weight:bold;letter-spacing:0.25px">sF8</div>
<div style="left:0px;top:110px;width:947px;height:26px;background:linear-gradient(180deg,#e9e9f2 0,#f6f7fb 3px,#f5f6fb 100%)"></div>
<div style="left:0px;top:110px;width:947px;height:1px;background:#9c9cb6"></div>
<div style="left:185px;top:113px;width:221px;height:23px;background:linear-gradient(180deg,#fdfdff 0%,#eef0f8 50%,#dfe2ee 100%);border:1px solid #1c3f8c;border-radius:5px 5px 0 0"></div>
<div style="left:194px;top:117px;width:16px;height:16px;background:#1a8078"></div>
<svg style="left:194px;top:117px;" width="16" height="16" viewBox="0 0 16 16"><rect x="2" y="1" width="12" height="9" fill="#fff"/><path d="M2 4 H14 M2 7 H14 M6 1 V10 M10 1 V10" stroke="#333" stroke-width="0.8"/><rect x="4" y="11" width="2" height="5" fill="#e01010"/><path d="M8 10 V16 M10 11 V16 M12 10 V16" stroke="#111" stroke-width="1.2"/></svg>
<div class="t" style="left:213px;top:116.5px;font-size:12px;line-height:16px;color:#000;letter-spacing:0.1px">软元件/缓冲存储器批量监视-1 (...</div>
<svg style="left:873px;top:116px;" width="46" height="14" viewBox="0 0 46 14"><path d="M7.5 2.5 L2.5 6.5 L7.5 10.5 Z" fill="#fff" stroke="#000"/><path d="M19.5 2.5 L24.5 6.5 L19.5 10.5 Z" fill="#fff" stroke="#000"/><path d="M34 7 H42 L38 11 Z" fill="#000"/></svg>
<div style="left:-2px;top:135px;width:923px;height:642px;background:#fff;border:1px solid #5e6c8c"></div>
<div style="left:-2px;top:136px;width:922px;height:640px;border:2px solid #ecc99a;border-top:3px solid #dcb98a;border-bottom-color:#fbeed4;border-right-color:#f7e6c8;"></div>
<div style="left:-6px;top:113px;width:191px;height:25px;background:linear-gradient(180deg,#fff3e0 0%,#ffdcae 25%,#ffc680 55%,#fcb45c 85%,#e9a860 100%);border:1px solid #1c3f8c;border-bottom:0;border-radius:4px 4px 0 0"></div>
<div class="t" style="left:-7px;top:116.5px;font-size:12px;line-height:16px;color:#000;font-weight:bold;letter-spacing:0.35px">[PRG]监视 执行中 MAIN (...</div>
<div style="left:165px;top:116px;width:16px;height:16px;background:#fffcf0;border:1px solid #d8d0b8"></div>
<svg style="left:165px;top:116px;" width="16" height="16" viewBox="0 0 16 16"><path d="M4.5 4.5 L11.5 11.5 M11.5 4.5 L4.5 11.5" stroke="#a8a496" stroke-width="2" fill="none"/></svg>
<div style="left:901px;top:138px;width:16px;height:636px;background:#f0f0f0"></div>
<div style="left:901px;top:156px;width:16px;height:18px;background:#cdcdcd"></div>
<svg style="left:904px;top:144px;" width="10" height="8" viewBox="0 0 10 8"><path d="M1 6 L5 2 L9 6" stroke="#505050" stroke-width="1.8" fill="none"/></svg>
<svg style="left:904px;top:760px;" width="10" height="8" viewBox="0 0 10 8"><path d="M1 2 L5 6 L9 2" stroke="#505050" stroke-width="1.8" fill="none"/></svg>
<svg style="left:921px;top:108px;" width="26" height="100" viewBox="0 0 26 100"><defs><linearGradient id="vt" x1="0" y1="0" x2="1" y2="0"><stop offset="0" stop-color="#fde6c6"/><stop offset="0.6" stop-color="#fbd29c"/><stop offset="1" stop-color="#f8c27c"/></linearGradient></defs><path d="M26 4 L9 20 Q5 24 5 30 L5 100 L26 100 Z" fill="url(#vt)" stroke="#3c5c9c" stroke-width="1"/></svg>
<div style="left:928px;top:141px;width:16px;height:8px;background:#1a6ee0;overflow:hidden"><div class="ic" style="left:-3px;top:0;width:22px;font-size:8px;line-height:8px;color:#fff;letter-spacing:0.45px;text-indent:0.4px">Dev</div></div>
<div style="left:928px;top:150px;width:8px;height:5px;background:#1a6ee0"></div>
<svg style="left:935px;top:148px;" width="10" height="10" viewBox="0 0 10 10"><path d="M1 3 H4 V1 H5 V3 H6 V1 H7 V3 H9 V9 H6 V6 H4 V9 H1 Z" fill="#000"/></svg>
<div class="t" style="left:928px;top:159px;width:16px;font-size:14px;line-height:16px;letter-spacing:1px;font-weight:bold;color:#000;writing-mode:vertical-rl;text-orientation:sideways;white-space:nowrap;height:60px;overflow:hidden">交叉参照</div>
<div style="left:0px;top:777px;width:947px;height:21px;background:linear-gradient(90deg,#d4d4e4 0%,#dedeea 30%,#e9e9f2 60%,#f0f0f6 100%)"></div>
<div style="left:-4px;top:780px;width:29px;height:20px;background:linear-gradient(180deg,#ffe2b8,#fdbf72);border:1px solid #5c6c9c;border-radius:3px 3px 0 0"></div>
<div class="t" style="left:-7px;top:783.5px;font-size:12px;line-height:16px;color:#000;font-weight:bold">输出</div>
<div class="lad" style="left:20px;top:138px;width:1px;height:363px;"></div>
<div class="lad" style="left:893px;top:138px;width:1px;height:363px;"></div>
<div class="lad" style="left:20px;top:168px;width:31px;height:1px;"></div>
<div class="lad" style="left:51px;top:159px;width:1px;height:18px;"></div>
<div class="lad" style="left:61px;top:159px;width:1px;height:18px;"></div>
<div class="lad" style="left:61px;top:168px;width:605px;height:1px;"></div>
<div class="lad" style="left:92px;top:168px;width:1px;height:122px;"></div>
<div class="lad" style="left:92px;top:229px;width:574px;height:1px;"></div>
<div class="lad" style="left:92px;top:289px;width:574px;height:1px;"></div>
<div class="lad" style="left:666px;top:160px;width:1px;height:18px;"></div>
<div class="lad" style="left:666px;top:160px;width:5px;height:1px;"></div>
<div class="lad" style="left:666px;top:177px;width:5px;height:1px;"></div>
<div class="lad" style="left:890px;top:160px;width:1px;height:18px;"></div>
<div class="lad" style="left:886px;top:160px;width:5px;height:1px;"></div>
<div class="lad" style="left:886px;top:177px;width:5px;height:1px;"></div>
<div class="lad" style="left:890px;top:168px;width:3px;height:1px;"></div>
<div class="lad" style="left:666px;top:220px;width:1px;height:18px;"></div>
<div class="lad" style="left:666px;top:220px;width:5px;height:1px;"></div>
<div class="lad" style="left:666px;top:237px;width:5px;height:1px;"></div>
<div class="lad" style="left:890px;top:220px;width:1px;height:18px;"></div>
<div class="lad" style="left:886px;top:220px;width:5px;height:1px;"></div>
<div class="lad" style="left:886px;top:237px;width:5px;height:1px;"></div>
<div class="lad" style="left:890px;top:229px;width:3px;height:1px;"></div>
<div class="lad" style="left:666px;top:281px;width:1px;height:18px;"></div>
<div class="lad" style="left:666px;top:281px;width:5px;height:1px;"></div>
<div class="lad" style="left:666px;top:298px;width:5px;height:1px;"></div>
<div class="lad" style="left:890px;top:281px;width:1px;height:18px;"></div>
<div class="lad" style="left:886px;top:281px;width:5px;height:1px;"></div>
<div class="lad" style="left:886px;top:298px;width:5px;height:1px;"></div>
<div class="lad" style="left:890px;top:289px;width:3px;height:1px;"></div>
<div class="lad" style="left:20px;top:349px;width:31px;height:1px;"></div>
<div class="lad" style="left:51px;top:340px;width:1px;height:18px;"></div>
<div class="lad" style="left:61px;top:340px;width:1px;height:18px;"></div>
<div class="lad" style="left:61px;top:349px;width:534px;height:1px;"></div>
<div class="lad" style="left:595px;top:341px;width:1px;height:17px;"></div>
<div class="lad" style="left:595px;top:341px;width:5px;height:1px;"></div>
<div class="lad" style="left:595px;top:357px;width:5px;height:1px;"></div>
<div class="lad" style="left:890px;top:341px;width:1px;height:17px;"></div>
<div class="lad" style="left:886px;top:341px;width:5px;height:1px;"></div>
<div class="lad" style="left:886px;top:357px;width:5px;height:1px;"></div>
<div class="lad" style="left:890px;top:349px;width:3px;height:1px;"></div>
<div class="lad" style="left:92px;top:349px;width:1px;height:61px;"></div>
<div class="lad" style="left:92px;top:409px;width:30px;height:1px;"></div>
<div class="lad" style="left:122px;top:400px;width:1px;height:18px;"></div>
<div class="lad" style="left:132px;top:400px;width:1px;height:18px;"></div>
<div class="lad" style="left:132px;top:409px;width:606px;height:1px;"></div>
<div class="lad" style="left:738px;top:401px;width:1px;height:18px;"></div>
<div class="lad" style="left:738px;top:401px;width:5px;height:1px;"></div>
<div class="lad" style="left:738px;top:418px;width:5px;height:1px;"></div>
<div class="lad" style="left:890px;top:401px;width:1px;height:18px;"></div>
<div class="lad" style="left:886px;top:401px;width:5px;height:1px;"></div>
<div class="lad" style="left:886px;top:418px;width:5px;height:1px;"></div>
<div class="lad" style="left:890px;top:409px;width:3px;height:1px;"></div>
<div class="lad" style="left:20px;top:470px;width:715px;height:1px;"></div>
<div class="lad" style="left:807px;top:470px;width:2px;height:1px;"></div>
<div class="lad" style="left:809px;top:461px;width:1px;height:18px;"></div>
<div class="lad" style="left:809px;top:461px;width:5px;height:1px;"></div>
<div class="lad" style="left:809px;top:478px;width:5px;height:1px;"></div>
<div class="lad" style="left:890px;top:461px;width:1px;height:18px;"></div>
<div class="lad" style="left:886px;top:461px;width:5px;height:1px;"></div>
<div class="lad" style="left:886px;top:478px;width:5px;height:1px;"></div>
<div class="lad" style="left:890px;top:470px;width:3px;height:1px;"></div>
<div style="left:735px;top:440px;width:72px;height:61px;background:#00009e;border:1px solid #000090;"></div>
<div style="left:736px;top:441px;width:70px;height:59px;border:1px solid #fff;"></div>
<div style="left:736px;top:470px;width:70px;height:1px;background:#fff"></div>
<div class="ll" style="left:39px;top:141px">M8002</div>
<div class="ll" style="left:9px;top:159px">0</div>
<div class="ll" style="left:43px;top:322px">X001</div>
<div class="ll" style="left:3px;top:340px">16</div>
<div class="ll" style="left:120px;top:382px">M0</div>
<div class="ll" style="left:3px;top:461px">28</div>
<div class="lt" style="left:673px;top:160.9px">MOV</div>
<div class="lt" style="left:737px;top:160.9px">K-2</div>
<div class="lt" style="left:814px;top:160.9px">D0</div>
<div class="lb" style="left:828px;top:178px">-2</div>
<div class="lt" style="left:673px;top:221.9px">MOV</div>
<div class="lt" style="left:737px;top:221.9px">K32767</div>
<div class="lt" style="left:814px;top:221.9px">D2</div>
<div class="lb" style="left:819px;top:238px">32767</div>
<div class="lt" style="left:673px;top:281.9px">MOV</div>
<div class="lt" style="left:737px;top:281.9px">K-1</div>
<div class="lt" style="left:814px;top:281.9px">D4</div>
<div class="lb" style="left:828px;top:298px">-1</div>
<div class="lt" style="left:602px;top:341.9px">BON</div>
<div class="lt" style="left:664px;top:341.9px">D4</div>
<div class="lt" style="left:735px;top:341.9px">M0</div>
<div class="lt" style="left:816px;top:341.9px">K15</div>
<div class="lb" style="left:685px;top:359px">-1</div>
<div class="lb" style="left:741px;top:358px">OFF</div>
<div class="lt" style="left:745px;top:401.9px">NEG</div>
<div class="lt" style="left:814px;top:401.9px">D4</div>
<div class="lb" style="left:828px;top:419px">-1</div>
<div class="lt" style="left:816px;top:462.9px">END</div>
<!-- PLC simulator window -->
<div style="left:901px;top:205px;width:980px;height:495px;background:#f0f0f0;background-clip:padding-box;border:1px solid rgba(0,0,0,0.36);box-shadow:0 1px 7px 0 rgba(0,0,0,0.28)"></div>
<div style="left:902px;top:206px;width:978px;height:30px;background:#fff"></div>
<svg style="left:909px;top:212px;" width="17" height="17" viewBox="0 0 17 17"><path d="M9.5 1.0 L11.4 1.5 L11.9 4.1 L12.9 5.1 L15.5 5.6 L16.0 7.5 L14.1 9.2 L13.7 10.6 L14.5 13.1 L13.1 14.5 L10.6 13.7 L9.2 14.1 L7.5 16.0 L5.6 15.5 L5.1 12.9 L4.1 11.9 L1.5 11.4 L1.0 9.5 L2.9 7.8 L3.3 6.4 L2.5 3.9 L3.9 2.5 L6.4 3.3 L7.8 2.9 Z" fill="#fff7f2" stroke="#e78e60" stroke-width="1.5" stroke-linejoin="round"/><path d="M7 6.3 Q9.6 6.6 9.3 8.4 Q10 10.4 7 10.7 M6.3 7.5 h1 M6.3 9.6 h1" fill="none" stroke="#e78e60" stroke-width="1"/></svg>
<div class="st" style="left:931px;top:212.5px;color:#9a9a9a;"><b>凌一</b><span style="letter-spacing:-1.41px">PLC</span><b>模拟器</b><span style="letter-spacing:0.03px"> - plc999.taobao.com  FX2N</span></div>
<svg style="left:1755px;top:209px;" width="120" height="22" viewBox="0 0 120 22"><path d="M6.5 11.5 H16.5" stroke="#9a9a9a" fill="none"/><rect x="51.5" y="6.5" width="9" height="9" stroke="#9a9a9a" fill="none"/><path d="M97.5 6.5 L107.5 16.5 M107.5 6.5 L97.5 16.5" stroke="#9a9a9a" fill="none"/></svg>
<div style="left:902px;top:236px;width:978px;height:25px;background:linear-gradient(180deg,#efefef,#f1f1f1)"></div>
<div style="left:905px;top:241px;width:2px;height:2px;background:#a8a8a8"></div><div style="left:905px;top:245px;width:2px;height:2px;background:#a8a8a8"></div><div style="left:905px;top:249px;width:2px;height:2px;background:#a8a8a8"></div><div style="left:905px;top:253px;width:2px;height:2px;background:#a8a8a8"></div>
<svg style="left:912px;top:240px;" width="17" height="16" viewBox="0 0 17 16"><path d="M1 3.5 Q1 2 2.5 2 H6 L7.5 3.5 H12 Q13.5 3.5 13.5 5 V6 H1 Z" fill="#e2b93c" stroke="#a07c14" stroke-width="0.8"/><path d="M0.8 6 H15 Q16 6 15.8 7 L14.6 12.8 Q14.4 14 13.2 14 H2.4 Q1.2 14 1.1 12.8 Z" fill="#fbe27a" stroke="#a07c14" stroke-width="0.8"/></svg>
<div class="st" style="left:932px;top:240px;color:#000;"><b>选择</b><span style="letter-spacing:-0.23px">PMW</span><b>文件</b></div>
<div style="left:1021px;top:241px;width:1px;height:15px;background:#c8c8c8"></div>
<svg style="left:1028px;top:240px;" width="13" height="17" viewBox="0 0 13 17"><path d="M0.5 0.5 L12 8.5 L0.5 16.5 Z" fill="#b4b4b4" stroke="#9c9c9c" stroke-width="0.6"/></svg>
<div class="st" style="left:1045px;top:240px;color:#8a8a8a;"><b>运行</b></div>
<svg style="left:1079px;top:241px;" width="15" height="15" viewBox="0 0 15 15"><rect x="0.5" y="0.5" width="14" height="14" rx="2" fill="#e0492c" stroke="#b83418"/><circle cx="7.5" cy="7.5" r="4.4" fill="none" stroke="#fff" stroke-width="1.5"/><path d="M7.5 5.2 V9.8" stroke="#fff" stroke-width="1.5"/></svg>
<div class="st" style="left:1097px;top:240px;color:#000;"><b>停止</b></div>
<div style="left:1131px;top:241px;width:1px;height:15px;background:#c8c8c8"></div>
<div style="left:1135px;top:236px;width:75px;height:25px;background:#f0f0f0;border:1px solid #a8a8a8"></div>
<div class="st" style="left:1138px;top:240px;color:#6d6d6d;"><span style="letter-spacing:-0.25px">COM10</span></div>
<svg style="left:1200px;top:246px;" width="7" height="4" viewBox="0 0 7 4"><path d="M0 0 H6 L3 3.5 Z" fill="#6d6d6d"/></svg>
<div class="st" style="left:1215.7px;top:240px;color:#000;"><b>关闭下载口</b></div>
<div style="left:1286px;top:241px;width:1px;height:15px;background:#c8c8c8"></div>
<div style="left:1290px;top:236px;width:75px;height:25px;background:#fff"></div>
<div class="st" style="left:1293px;top:240px;color:#000;"><span style="letter-spacing:-0.25px">COM11</span></div>
<svg style="left:1355px;top:246px;" width="7" height="4" viewBox="0 0 7 4"><path d="M0 0 H6 L3 3.5 Z" fill="#000"/></svg>
<div class="st" style="left:1371px;top:240px;color:#000;"><b>开启</b><span style="letter-spacing:-0.22px">485</span><b>总线</b></div>
<div class="st" style="left:1452px;top:240px;color:#000;"><b>显示</b><span style="letter-spacing:1.45px">/</span><b>隐藏反汇编</b></div>
<div style="left:1548px;top:237px;width:32px;height:22px;background:#0b800b"></div>
<div class="st" style="left:1552px;top:240px;color:#003c00;"><b>运行</b></div>
<div style="left:1583px;top:241px;width:1px;height:15px;background:#c8c8c8"></div>
<div class="st" style="left:1591px;top:240px;color:#000;"><b>实用工具</b></div>
<svg style="left:1645px;top:247px;" width="7" height="4" viewBox="0 0 7 4"><path d="M0 0 H6 L3 3.5 Z" fill="#000"/></svg>
<div style="left:1656px;top:236px;width:75px;height:25px;background:#e1e1e1;border:1px solid #adadad"></div>
<div class="st" style="left:1660px;top:240.5px;color:#000;"><span style="letter-spacing:-0.63px">FX2N</span></div>
<svg style="left:1717px;top:244px;" width="10" height="7" viewBox="0 0 10 7"><path d="M1 1.5 L5 5.5 L9 1.5" stroke="#444" stroke-width="1.1" fill="none"/></svg>
<div style="left:902px;top:261px;width:978px;height:24px;background:linear-gradient(180deg,#fcfcfc,#f6f6f6 50%,#f0f0f0)"></div>
<div style="left:905px;top:266px;width:2px;height:2px;background:#a8a8a8"></div><div style="left:905px;top:270px;width:2px;height:2px;background:#a8a8a8"></div><div style="left:905px;top:274px;width:2px;height:2px;background:#a8a8a8"></div><div style="left:905px;top:278px;width:2px;height:2px;background:#a8a8a8"></div>
<div class="st" style="left:918px;top:265px;color:#000;"><span style="letter-spacing:-1.77px">S</span></div>
<div class="st" style="left:940px;top:265px;color:#000;"><span style="letter-spacing:-1.03px">X</span></div>
<div class="st" style="left:964px;top:265px;color:#000;"><span style="letter-spacing:-1.49px">Y</span></div>
<div class="st" style="left:986px;top:265px;color:#000;"><span style="letter-spacing:-0.27px">D</span></div>
<div class="st" style="left:1008px;top:265px;color:#000;"><span style="letter-spacing:-0.71px">D8XXX</span></div>
<div class="st" style="left:1060px;top:265px;color:#000;"><span style="letter-spacing:0.1px">Z/V</span></div>
<div class="st" style="left:1092px;top:265px;color:#000;"><span style="letter-spacing:0.18px">M0-M1535</span></div>
<div class="st" style="left:1168px;top:265px;color:#000;"><span style="letter-spacing:-0.49px">M8XXX</span></div>
<div class="st" style="left:1223px;top:265px;color:#000;"><span style="letter-spacing:-0.31px">TCoil</span></div>
<div class="st" style="left:1264px;top:265px;color:#000;"><span style="letter-spacing:-0.18px">TContact</span></div>
<div class="st" style="left:1327px;top:265px;color:#000;"><span style="letter-spacing:-0.4px">TValue</span></div>
<div class="st" style="left:1378px;top:265px;color:#000;"><span style="letter-spacing:-0.63px">TSet</span></div>
<div class="st" style="left:1415px;top:265px;color:#000;"><span style="letter-spacing:-0.35px">CCoil</span></div>
<div class="st" style="left:1457px;top:265px;color:#000;"><span style="letter-spacing:-0.21px">CContact</span></div>
<div class="st" style="left:1521px;top:265px;color:#000;"><span style="letter-spacing:-0.53px">C16Set</span></div>
<div class="st" style="left:1573px;top:265px;color:#000;"><span style="letter-spacing:-0.38px">C16Value</span></div>
<div class="st" style="left:1639px;top:265px;color:#000;"><span style="letter-spacing:-0.53px">C32Set</span></div>
<div class="st" style="left:1691px;top:265px;color:#000;"><span style="letter-spacing:-0.38px">C32Value</span></div>
<div style="left:935px;top:293px;width:721px;height:1px;background:#dcdcdc"></div>
<div class="gl" style="left:910px;top:285.5px">输出</div>
<div class="rb" style="left:908px;top:306px;width:40px;height:32px;">Y00</div>
<div class="rb" style="left:954px;top:306px;width:40px;height:32px;">Y01</div>
<div class="rb" style="left:1000px;top:306px;width:40px;height:32px;">Y02</div>
<div class="rb" style="left:1046px;top:306px;width:40px;height:32px;">Y03</div>
<div class="rb" style="left:1092px;top:306px;width:40px;height:32px;">Y04</div>
<div class="rb" style="left:1138px;top:306px;width:40px;height:32px;">Y05</div>
<div class="rb" style="left:1184px;top:306px;width:40px;height:32px;">Y06</div>
<div class="rb" style="left:1230px;top:306px;width:40px;height:32px;">Y07</div>
<div class="rb" style="left:1276px;top:306px;width:40px;height:32px;">Y10</div>
<div class="rb" style="left:1322px;top:306px;width:40px;height:32px;">Y11</div>
<div class="rb" style="left:1368px;top:306px;width:40px;height:32px;">Y12</div>
<div class="rb" style="left:1414px;top:306px;width:40px;height:32px;">Y13</div>
<div class="rb" style="left:1460px;top:306px;width:40px;height:32px;">Y14</div>
<div class="rb" style="left:1506px;top:306px;width:40px;height:32px;">Y15</div>
<div class="rb" style="left:1552px;top:306px;width:40px;height:32px;">Y16</div>
<div class="rb" style="left:1598px;top:306px;width:40px;height:32px;">Y17</div>
<div style="left:903px;top:344px;width:754px;height:273px;background:#a9a9a9;border:2px solid #6a6a6a;border-right:0;border-bottom:0"></div>
<div style="left:903px;top:344px;width:754px;height:1px;background:#9a9a9a"></div>
<div style="left:1638px;top:346px;width:19px;height:271px;background:#f0f0f0"></div>
<div style="left:1640px;top:363px;width:14px;height:131px;background:#cdcdcd"></div>
<svg style="left:1642px;top:350px;" width="11" height="8" viewBox="0 0 11 8"><path d="M1.5 6.5 L5.5 2.5 L9.5 6.5" stroke="#555" stroke-width="1.8" fill="none"/></svg>
<svg style="left:1642px;top:604px;" width="11" height="8" viewBox="0 0 11 8"><path d="M1.5 1.5 L5.5 5.5 L9.5 1.5" stroke="#555" stroke-width="1.8" fill="none"/></svg>
<div style="left:905px;top:346px;width:692px;height:271px;background:#d6e2f0;border-right:1px solid #6c7078"></div>
<div style="left:905px;top:346px;width:691px;height:31px;background:linear-gradient(180deg,#e4ecf5 0,#bccbde 1px,#c6d4e6 40%,#d6e3f1 100%)"></div>
<div class="st" style="left:912px;top:357.5px;color:#9aa4b2;"><span style="letter-spacing:-0.07px">D0-7999</span></div>
<div style="left:1570px;top:357px;width:16px;height:16px;background:#a3b0c0"></div>
<svg style="left:1570px;top:357px;" width="16" height="16" viewBox="0 0 16 16"><path d="M5.5 5.5 L10.5 10.5 M10.5 5.5 L5.5 10.5" stroke="#fff" stroke-width="1.5" fill="none"/></svg>
<div style="left:912px;top:377px;width:677px;height:240px;background:#f0f0f0"></div>
<div style="left:915px;top:387px;width:241px;height:39px;border:1px solid #dcdcdc"></div>
<div style="left:1162px;top:387px;width:171px;height:39px;border:1px solid #dcdcdc"></div>
<div class="gl" style="left:920px;top:379.5px;background:#f0f0f0;padding:0 2px">表示</div>
<div class="gl" style="left:1168px;top:379.5px;background:#f0f0f0;padding:0 2px">格式</div>
<svg style="left:920.5px;top:400.5px;" width="14" height="14" viewBox="0 0 14 14"><circle cx="7" cy="7" r="6" fill="#fff" stroke="#333" stroke-width="1"/><circle cx="7" cy="7" r="3.2" fill="#333"/></svg>
<div class="gl" style="left:939px;top:401px;letter-spacing:-0.35px">16位整数</div>
<svg style="left:997.5px;top:400.5px;" width="14" height="14" viewBox="0 0 14 14"><circle cx="7" cy="7" r="6" fill="#fff" stroke="#333" stroke-width="1"/></svg>
<div class="gl" style="left:1016px;top:401px;letter-spacing:-0.35px">32位整数</div>
<svg style="left:1074.5px;top:400.5px;" width="14" height="14" viewBox="0 0 14 14"><circle cx="7" cy="7" r="6" fill="#fff" stroke="#c4c4c4" stroke-width="1"/></svg>
<div class="gl" style="left:1093px;top:401px;letter-spacing:-0.35px;color:#a8a8a8">32位浮点</div>
<svg style="left:1167.5px;top:400.5px;" width="14" height="14" viewBox="0 0 14 14"><circle cx="7" cy="7" r="6" fill="#fff" stroke="#333" stroke-width="1"/><circle cx="7" cy="7" r="3.2" fill="#333"/></svg>
<div class="gl" style="left:1186px;top:401px">十进制</div>
<svg style="left:1244.5px;top:400.5px;" width="14" height="14" viewBox="0 0 14 14"><circle cx="7" cy="7" r="6" fill="#fff" stroke="#333" stroke-width="1"/></svg>
<div class="gl" style="left:1263px;top:401px">十六进制</div>
<div style="left:1340px;top:394px;width:73px;height:21px;background:#e1e1e1;border:1px solid #adadad"></div>
<div class="gl" style="left:1340px;width:73px;text-align:center;top:397px">说明</div>
<div class="cell" style="left:949px;top:437px;width:96px;height:19px;"></div>
<div class="gn" style="left:909px;width:36px;text-align:right;top:440px">0</div>
<div class="gn" style="left:950px;top:440px">-2</div>
<div class="cell" style="left:1081px;top:437px;width:96px;height:19px;"></div>
<div class="gn" style="left:1041px;width:36px;text-align:right;top:440px">1</div>
<div class="gn" style="left:1082px;top:440px">0</div>
<div class="cell" style="left:1213px;top:437px;width:96px;height:19px;"></div>
<div class="gn" style="left:1173px;width:36px;text-align:right;top:440px">2</div>
<div class="gn" style="left:1214px;top:440px">32767</div>
<div class="cell" style="left:1345px;top:437px;width:96px;height:19px;"></div>
<div class="gn" style="left:1305px;width:36px;text-align:right;top:440px">3</div>
<div class="gn" style="left:1346px;top:440px">0</div>
<div class="cell" style="left:1477px;top:437px;width:96px;height:19px;"></div>
<div class="gn" style="left:1437px;width:36px;text-align:right;top:440px">4</div>
<div class="gn" style="left:1478px;top:440px">-1</div>
<div class="cell" style="left:949px;top:457px;width:96px;height:19px;"></div>
<div class="gn" style="left:909px;width:36px;text-align:right;top:460px">5</div>
<div class="gn" style="left:950px;top:460px">0</div>
<div class="cell" style="left:1081px;top:457px;width:96px;height:19px;"></div>
<div class="gn" style="left:1041px;width:36px;text-align:right;top:460px">6</div>
<div class="gn" style="left:1082px;top:460px">0</div>
<div class="cell" style="left:1213px;top:457px;width:96px;height:19px;"></div>
<div class="gn" style="left:1173px;width:36px;text-align:right;top:460px">7</div>
<div class="gn" style="left:1214px;top:460px">0</div>
<div class="cell" style="left:1345px;top:457px;width:96px;height:19px;"></div>
<div class="gn" style="left:1305px;width:36px;text-align:right;top:460px">8</div>
<div class="gn" style="left:1346px;top:460px">0</div>
<div class="cell" style="left:1477px;top:457px;width:96px;height:19px;"></div>
<div class="gn" style="left:1437px;width:36px;text-align:right;top:460px">9</div>
<div class="gn" style="left:1478px;top:460px">0</div>
<div class="cell" style="left:949px;top:477px;width:96px;height:19px;"></div>
<div class="gn" style="left:909px;width:36px;text-align:right;top:480px">10</div>
<div class="gn" style="left:950px;top:480px">0</div>
<div class="cell" style="left:1081px;top:477px;width:96px;height:19px;"></div>
<div class="gn" style="left:1041px;width:36px;text-align:right;top:480px">11</div>
<div class="gn" style="left:1082px;top:480px">0</div>
<div class="cell" style="left:1213px;top:477px;width:96px;height:19px;"></div>
<div class="gn" style="left:1173px;width:36px;text-align:right;top:480px">12</div>
<div class="gn" style="left:1214px;top:480px">0</div>
<div class="cell" style="left:1345px;top:477px;width:96px;height:19px;"></div>
<div class="gn" style="left:1305px;width:36px;text-align:right;top:480px">13</div>
<div class="gn" style="left:1346px;top:480px">0</div>
<div class="cell" style="left:1477px;top:477px;width:96px;height:19px;"></div>
<div class="gn" style="left:1437px;width:36px;text-align:right;top:480px">14</div>
<div class="gn" style="left:1478px;top:480px">0</div>
<div class="cell" style="left:949px;top:497px;width:96px;height:19px;"></div>
<div class="gn" style="left:909px;width:36px;text-align:right;top:500px">15</div>
<div class="gn" style="left:950px;top:500px">0</div>
<div class="cell" style="left:1081px;top:497px;width:96px;height:19px;"></div>
<div class="gn" style="left:1041px;width:36px;text-align:right;top:500px">16</div>
<div class="gn" style="left:1082px;top:500px">0</div>
<div class="cell" style="left:1213px;top:497px;width:96px;height:19px;"></div>
<div class="gn" style="left:1173px;width:36px;text-align:right;top:500px">17</div>
<div class="gn" style="left:1214px;top:500px">0</div>
<div class="cell" style="left:1345px;top:497px;width:96px;height:19px;"></div>
<div class="gn" style="left:1305px;width:36px;text-align:right;top:500px">18</div>
<div class="gn" style="left:1346px;top:500px">0</div>
<div class="cell" style="left:1477px;top:497px;width:96px;height:19px;"></div>
<div class="gn" style="left:1437px;width:36px;text-align:right;top:500px">19</div>
<div class="gn" style="left:1478px;top:500px">0</div>
<div class="cell" style="left:949px;top:517px;width:96px;height:19px;"></div>
<div class="gn" style="left:909px;width:36px;text-align:right;top:520px">20</div>
<div class="gn" style="left:950px;top:520px">0</div>
<div class="cell" style="left:1081px;top:517px;width:96px;height:19px;"></div>
<div class="gn" style="left:1041px;width:36px;text-align:right;top:520px">21</div>
<div class="gn" style="left:1082px;top:520px">0</div>
<div class="cell" style="left:1213px;top:517px;width:96px;height:19px;"></div>
<div class="gn" style="left:1173px;width:36px;text-align:right;top:520px">22</div>
<div class="gn" style="left:1214px;top:520px">0</div>
<div class="cell" style="left:1345px;top:517px;width:96px;height:19px;"></div>
<div class="gn" style="left:1305px;width:36px;text-align:right;top:520px">23</div>
<div class="gn" style="left:1346px;top:520px">0</div>
<div class="cell" style="left:1477px;top:517px;width:96px;height:19px;"></div>
<div class="gn" style="left:1437px;width:36px;text-align:right;top:520px">24</div>
<div class="gn" style="left:1478px;top:520px">0</div>
<div class="cell" style="left:949px;top:537px;width:96px;height:19px;"></div>
<div class="gn" style="left:909px;width:36px;text-align:right;top:540px">25</div>
<div class="gn" style="left:950px;top:540px">0</div>
<div class="cell" style="left:1081px;top:537px;width:96px;height:19px;"></div>
<div class="gn" style="left:1041px;width:36px;text-align:right;top:540px">26</div>
<div class="gn" style="left:1082px;top:540px">0</div>
<div class="cell" style="left:1213px;top:537px;width:96px;height:19px;"></div>
<div class="gn" style="left:1173px;width:36px;text-align:right;top:540px">27</div>
<div class="gn" style="left:1214px;top:540px">0</div>
<div class="cell" style="left:1345px;top:537px;width:96px;height:19px;"></div>
<div class="gn" style="left:1305px;width:36px;text-align:right;top:540px">28</div>
<div class="gn" style="left:1346px;top:540px">0</div>
<div class="cell" style="left:1477px;top:537px;width:96px;height:19px;"></div>
<div class="gn" style="left:1437px;width:36px;text-align:right;top:540px">29</div>
<div class="gn" style="left:1478px;top:540px">0</div>
<div class="cell" style="left:949px;top:557px;width:96px;height:19px;"></div>
<div class="gn" style="left:909px;width:36px;text-align:right;top:560px">30</div>
<div class="gn" style="left:950px;top:560px">0</div>
<div class="cell" style="left:1081px;top:557px;width:96px;height:19px;"></div>
<div class="gn" style="left:1041px;width:36px;text-align:right;top:560px">31</div>
<div class="gn" style="left:1082px;top:560px">0</div>
<div class="cell" style="left:1213px;top:557px;width:96px;height:19px;"></div>
<div class="gn" style="left:1173px;width:36px;text-align:right;top:560px">32</div>
<div class="gn" style="left:1214px;top:560px">0</div>
<div class="cell" style="left:1345px;top:557px;width:96px;height:19px;"></div>
<div class="gn" style="left:1305px;width:36px;text-align:right;top:560px">33</div>
<div class="gn" style="left:1346px;top:560px">0</div>
<div class="cell" style="left:1477px;top:557px;width:96px;height:19px;"></div>
<div class="gn" style="left:1437px;width:36px;text-align:right;top:560px">34</div>
<div class="gn" style="left:1478px;top:560px">0</div>
<div class="cell" style="left:949px;top:577px;width:96px;height:19px;"></div>
<div class="gn" style="left:909px;width:36px;text-align:right;top:580px">35</div>
<div class="gn" style="left:950px;top:580px">0</div>
<div class="cell" style="left:1081px;top:577px;width:96px;height:19px;"></div>
<div class="gn" style="left:1041px;width:36px;text-align:right;top:580px">36</div>
<div class="gn" style="left:1082px;top:580px">0</div>
<div class="cell" style="left:1213px;top:577px;width:96px;height:19px;"></div>
<div class="gn" style="left:1173px;width:36px;text-align:right;top:580px">37</div>
<div class="gn" style="left:1214px;top:580px">0</div>
<div class="cell" style="left:1345px;top:577px;width:96px;height:19px;"></div>
<div class="gn" style="left:1305px;width:36px;text-align:right;top:580px">38</div>
<div class="gn" style="left:1346px;top:580px">0</div>
<div class="cell" style="left:1477px;top:577px;width:96px;height:19px;"></div>
<div class="gn" style="left:1437px;width:36px;text-align:right;top:580px">39</div>
<div class="gn" style="left:1478px;top:580px">0</div>
<div class="cell" style="left:949px;top:597px;width:96px;height:19px;"></div>
<div class="gn" style="left:909px;width:36px;text-align:right;top:600px">40</div>
<div class="gn" style="left:950px;top:600px">0</div>
<div class="cell" style="left:1081px;top:597px;width:96px;height:19px;"></div>
<div class="gn" style="left:1041px;width:36px;text-align:right;top:600px">41</div>
<div class="gn" style="left:1082px;top:600px">0</div>
<div class="cell" style="left:1213px;top:597px;width:96px;height:19px;"></div>
<div class="gn" style="left:1173px;width:36px;text-align:right;top:600px">42</div>
<div class="gn" style="left:1214px;top:600px">0</div>
<div class="cell" style="left:1345px;top:597px;width:96px;height:19px;"></div>
<div class="gn" style="left:1305px;width:36px;text-align:right;top:600px">43</div>
<div class="gn" style="left:1346px;top:600px">0</div>
<div class="cell" style="left:1477px;top:597px;width:96px;height:19px;"></div>
<div class="gn" style="left:1437px;width:36px;text-align:right;top:600px">44</div>
<div class="gn" style="left:1478px;top:600px">0</div>
<div style="left:1573px;top:437px;width:16px;height:180px;background:#f0f0f0"></div>
<div style="left:1573px;top:453px;width:16px;height:18px;background:#cdcdcd"></div>
<svg style="left:1575px;top:441px;" width="11" height="8" viewBox="0 0 11 8"><path d="M1.5 6.5 L5.5 2.5 L9.5 6.5" stroke="#555" stroke-width="1.8" fill="none"/></svg>
<div style="left:902px;top:617px;width:755px;height:60px;background:#f0f0f0;border-top:1px solid #fff"></div>
<div style="left:935px;top:626px;width:721px;height:1px;background:#dcdcdc"></div>
<div class="gl" style="left:910px;top:618.5px">输入</div>
<div class="rb" style="left:908px;top:639px;width:40px;height:32px;">X00</div>
<div class="rb" style="left:954px;top:639px;width:40px;height:32px;">X01</div>
<div class="rb" style="left:1000px;top:639px;width:40px;height:32px;">X02</div>
<div class="rb" style="left:1046px;top:639px;width:40px;height:32px;">X03</div>
<div class="rb" style="left:1092px;top:639px;width:40px;height:32px;">X04</div>
<div class="rb" style="left:1138px;top:639px;width:40px;height:32px;">X05</div>
<div class="rb" style="left:1184px;top:639px;width:40px;height:32px;">X06</div>
<div class="rb" style="left:1230px;top:639px;width:40px;height:32px;">X07</div>
<div class="rb" style="left:1276px;top:639px;width:40px;height:32px;">X10</div>
<div class="rb" style="left:1322px;top:639px;width:40px;height:32px;">X11</div>
<div class="rb" style="left:1368px;top:639px;width:40px;height:32px;">X12</div>
<div class="rb" style="left:1414px;top:639px;width:40px;height:32px;">X13</div>
<div class="rb" style="left:1460px;top:639px;width:40px;height:32px;">X14</div>
<div class="rb" style="left:1506px;top:639px;width:40px;height:32px;">X15</div>
<div class="rb" style="left:1552px;top:639px;width:40px;height:32px;">X16</div>
<div class="rb" style="left:1598px;top:639px;width:40px;height:32px;">X17</div>
<div style="left:902px;top:676px;width:755px;height:1px;background:#dcdcdc"></div>
<div style="left:1657px;top:286px;width:223px;height:391px;background:#fff;border:1px solid #828790;border-right-color:#e4e4e4"></div>
<div style="left:1659px;top:288px;width:219.5px;height:13px;background:#0078d7"></div>
<div class="gn" style="left:1660px;top:288.5px;color:#fff">0</div>
<div class="gn" style="left:1708px;top:288.5px;color:#fff">LD</div>
<div class="gn" style="left:1756px;top:288.5px;color:#fff">M8002</div>
<div class="gn" style="left:1660px;top:301.5px;color:#000">1</div>
<div class="gn" style="left:1708px;top:301.5px;color:#000">MOV</div>
<div class="gn" style="left:1756px;top:301.5px;color:#000">K-2</div>
<div class="gn" style="left:1804px;top:301.5px;color:#000">D0</div>
<div class="gn" style="left:1660px;top:314.5px;color:#000">6</div>
<div class="gn" style="left:1708px;top:314.5px;color:#000">MOV</div>
<div class="gn" style="left:1756px;top:314.5px;color:#000">K32767</div>
<div class="gn" style="left:1804px;top:314.5px;color:#000">D2</div>
<div class="gn" style="left:1660px;top:327.5px;color:#000">11</div>
<div class="gn" style="left:1708px;top:327.5px;color:#000">MOV</div>
<div class="gn" style="left:1756px;top:327.5px;color:#000">K-1</div>
<div class="gn" style="left:1804px;top:327.5px;color:#000">D4</div>
<div class="gn" style="left:1660px;top:340.5px;color:#000">16</div>
<div class="gn" style="left:1708px;top:340.5px;color:#000">LD</div>
<div class="gn" style="left:1756px;top:340.5px;color:#000">X1</div>
<div class="gn" style="left:1660px;top:353.5px;color:#000">17</div>
<div class="gn" style="left:1708px;top:353.5px;color:#000">BON</div>
<div class="gn" style="left:1756px;top:353.5px;color:#000">D4</div>
<div class="gn" style="left:1804px;top:353.5px;color:#000">M0</div>
<div class="gn" style="left:1852px;top:353.5px;color:#000">K15</div>
<div class="gn" style="left:1660px;top:366.5px;color:#000">24</div>
<div class="gn" style="left:1708px;top:366.5px;color:#000">AND</div>
<div class="gn" style="left:1756px;top:366.5px;color:#000">M0</div>
<div class="gn" style="left:1660px;top:379.5px;color:#000">25</div>
<div class="gn" style="left:1708px;top:379.5px;color:#000">NEG</div>
<div class="gn" style="left:1756px;top:379.5px;color:#000">D4</div>
<div class="gn" style="left:1660px;top:392.5px;color:#000">28</div>
<div class="gn" style="left:1708px;top:392.5px;color:#000">END</div>
<div style="left:902px;top:677px;width:978px;height:22px;background:#f0f0f0"></div>
<div class="st" style="left:906px;top:681px;color:#0000ee;"><u><span style="letter-spacing:0.09px">plc999.taobao.com</span></u></div>
<div class="st" style="left:1805px;top:680.5px;color:#000;"><span style="letter-spacing:-0.22px">20160410</span></div>
<svg style="left:1866px;top:685px;" width="12" height="12" viewBox="0 0 12 12"><path d="M9 1 h2 v2 h-2 Z M9 5 h2 v2 h-2 Z M9 9 h2 v2 h-2 Z M5 5 h2 v2 h-2 Z M5 9 h2 v2 h-2 Z M1 9 h2 v2 h-2 Z" fill="#b4b4b4"/></svg>
</div>
</body></html>
